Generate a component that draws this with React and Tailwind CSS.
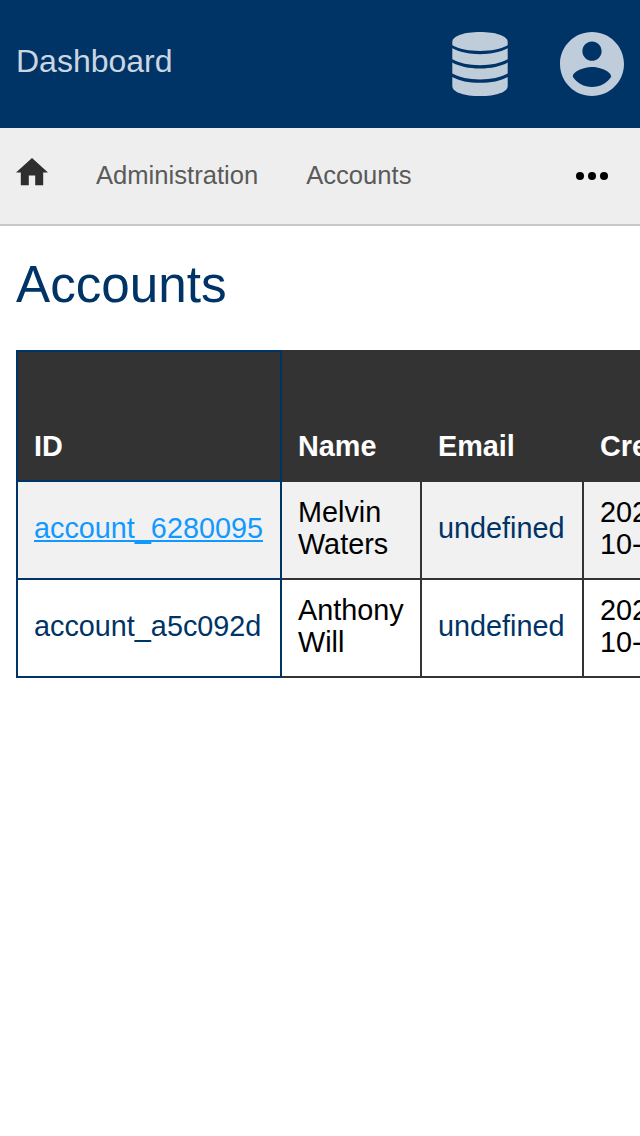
const rows = [
  { id: "account_6280095", first: "Melvin", last: "Waters", bg: "bg-[#f1f1f1]", link: "text-[#1199ff] underline" },
  { id: "account_a5c092d", first: "Anthony", last: "Will", bg: "bg-white", link: "text-[#003366]" },
];

function DatabaseIcon() {
  return (
    <svg className="h-16 w-14" viewBox="0 0 56 64" fill="currentColor">
      <path d="M0.3 10C0.3 4 12 0 28 0s27.700 4 27.700 10v3.200C49 17 39 18.900 28 18.900S7 17 0.300 13.200z" />
      <path d="M0.300 16.300C7 20 17 22.200 28 22.200s21-2.200 27.700-5.900V27.300C49 31.200 39 33.200 28 33.200S7 31.200 0.300 27.300z" />
      <path d="M0.300 30.600C7 34.500 17 36.600 28 36.600s21-2.100 27.700-6V41.500C49 45.400 39 47.400 28 47.400S7 45.400 0.300 41.500z" />
      <path d="M0.300 44.900C7 48.800 17 50.800 28 50.800s21-2 27.700-5.900v9C55.700 60 44 64 28 64S0.300 60 0.300 53.900z" />
    </svg>
  );
}

function AccountIcon() {
  return (
    <svg className="size-16" viewBox="2 2 20 20" fill="currentColor">
      <path d="M12 2C6.48 2 2 6.48 2 12s4.48 10 10 10 10-4.480 10-10S17.520 2 12 2zm0 3c1.660 0 3 1.340 3 3s-1.340 3-3 3-3-1.340-3-3 1.340-3 3-3zm0 14.200c-2.500 0-4.710-1.280-6-3.220.03-1.990 4-3.080 6-3.080 1.990 0 5.970 1.090 6 3.080-1.290 1.940-3.500 3.220-6 3.220z" />
    </svg>
  );
}

export default function App() {
  return (
    <div className="min-h-[1136px] w-full overflow-hidden bg-white font-['Liberation_Sans',Arial,sans-serif]">
      <header className="flex h-32 items-center justify-between bg-[#003366] px-4">
        <a className="pb-1.5 text-[32px] leading-9 text-[#ccd6e0]">Dashboard</a>
        <div className="flex gap-[52px] text-[#bfccd9]">
          <DatabaseIcon />
          <AccountIcon />
        </div>
      </header>

      <nav className="flex h-[98px] items-center border-b-2 border-[#c8c8c8] bg-[#eeeeee] pr-8 pl-4 text-[25.6px] text-[#5a5a5a]">
        <svg className="mb-2 h-[27.2px] w-8 text-[#2e2e2e]" viewBox="2 3 20 17" fill="currentColor">
          <path d="M10 20v-6h4v6h5v-8h3L12 3 2 12h3v8z" />
        </svg>
        <a className="ml-12 pb-0.5 leading-8">Administration</a>
        <a className="ml-12 pb-0.5 leading-8">Accounts</a>
        <svg className="ml-auto h-2 w-8 text-black" viewBox="0 0 32 8" fill="currentColor">
          <circle cx="4" cy="4" r="4" />
          <circle cx="16" cy="4" r="4" />
          <circle cx="28" cy="4" r="4" />
        </svg>
      </nav>

      <main className="pt-[30px] pl-4">
        <h1 className="text-[51.2px] leading-[58px] text-[#003366]">Accounts</h1>
        <table className="mt-9 w-[760px] table-fixed border-separate border-spacing-0 text-left text-[28.8px] leading-8">
          <colgroup>
            <col className="w-[266px]" />
            <col className="w-[140px]" />
            <col className="w-[162px]" />
            <col className="w-[192px]" />
          </colgroup>
          <thead>
            <tr className="h-[132px] bg-[#333333] align-bottom text-white">
              <th className="border-2 border-[#003366] px-4 pb-[18px]">ID</th>
              <th className="border-b-2 border-[#333333] px-4 pb-[18px]">Name</th>
              <th className="border-b-2 border-[#333333] px-4 pb-[18px]">Email</th>
              <th className="border-b-2 border-[#333333] px-4 pb-[18px]">Created</th>
            </tr>
          </thead>
          <tbody>
            {rows.map((row) => (
              <tr key={row.id} className={`h-[98px] ${row.bg}`}>
                <td className="border-x-2 border-b-2 border-[#003366] px-4 pb-1">
                  <a className={row.link}>{row.id}</a>
                </td>
                <td className="border-r-2 border-b-2 border-[#333333] pb-1 pl-4">
                  {row.first}
                  <br />
                  {row.last}
                </td>
                <td className="border-r-2 border-b-2 border-[#333333] pb-1 pl-4">
                  <a className="text-[#003366]">undefined</a>
                </td>
                <td className="border-r-2 border-b-2 border-[#333333] pb-1 pl-4">
                  2023-
                  <br />
                  10-11
                </td>
              </tr>
            ))}
          </tbody>
        </table>
      </main>
    </div>
  );
}
